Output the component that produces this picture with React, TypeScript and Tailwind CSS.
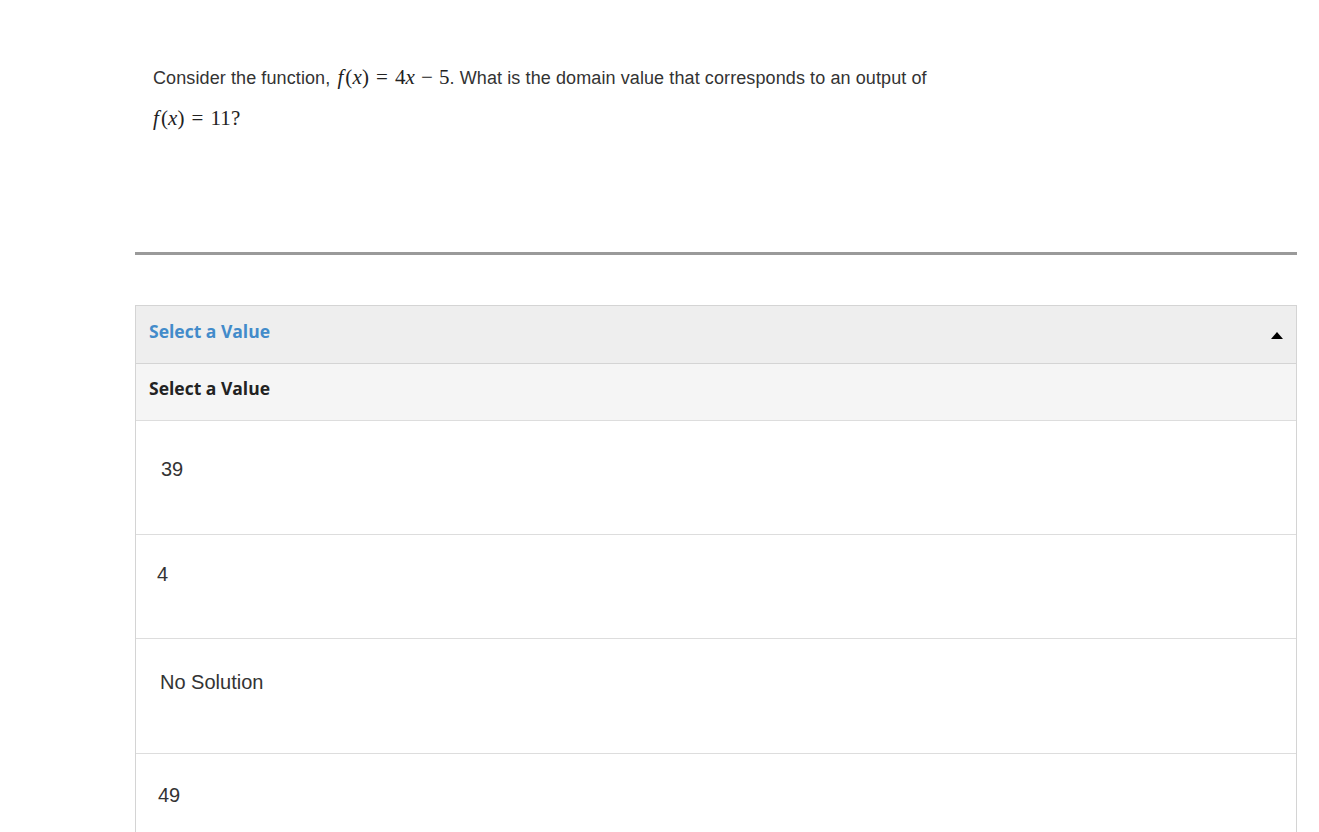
const options = [
  { label: "39", h: "h-[114px]", pl: "pl-[25px]", pt: "pt-[36px]" },
  { label: "4", h: "h-[104px]", pl: "pl-[21px]", pt: "pt-[27px]" },
  { label: "No Solution", h: "h-[115px]", pl: "pl-[24px]", pt: "pt-[31px]" },
  { label: "49", h: "h-[114px]", pl: "pl-[22px]", pt: "pt-[29px]" },
];

function M({ children }: { children: React.ReactNode }) {
  return <span className="font-['Liberation_Serif',serif] text-[21px] text-[#222]">{children}</span>;
}

function Op({ children }: { children: React.ReactNode }) {
  return <span className="mx-[7px]">{children}</span>;
}

export default function App() {
  return (
    <div className="min-h-screen bg-white">
      <div className="pl-[135px] pr-[22px] pt-[64px]">
        <div className="px-[18px] text-[18px] tracking-[0.1px] text-[#333] font-['Liberation_Sans',Arial,sans-serif]">
          <p className="leading-[26px]">
            Consider the function,{" "}
            <M>
              <i className="pl-[2px] pr-[2px]">f</i>(<i>x</i>)<Op>=</Op>4<i>x</i>
              <span className="mx-[6px]">−</span>5
            </M>
            . What is the domain value that corresponds to an output of
          </p>
          <p className="mt-[14px] leading-[26px]">
            <M>
              <i className="pr-[2px]">f</i>(<i>x</i>)<Op>=</Op>11?
            </M>
          </p>
        </div>

        <hr className="mt-[120px] border-0 h-[3px] bg-[#9a9a9a]" />

        <div className="mt-[50px] border border-[#d4d4d4] font-['Open_Sans',sans-serif]">
          <div className="flex h-[58px] items-center justify-between bg-[#eeeeee] pl-[13px] pr-[13px] pb-[6px] border-b border-[#d4d4d4]">
            <span className="text-[17.5px] font-bold text-[#428bca]">Select a Value</span>
            <svg width="12" height="7" viewBox="0 0 12 7" className="mt-[8px]">
              <path d="M6 0 L12 7 L0 7 Z" fill="#000" />
            </svg>
          </div>
          <div className="flex h-[57px] items-center bg-[#f5f5f5] pl-[13px] pb-[7px] border-b border-[#dddddd]">
            <span className="text-[17.5px] font-bold text-[#222]">Select a Value</span>
          </div>
          {options.map((o) => (
            <div key={o.label} className={`${o.h} ${o.pl} ${o.pt} border-b border-[#dddddd] bg-white`}>
              <span className="block leading-[24px] text-[20px] text-[#333] font-['Liberation_Sans',Arial,sans-serif]">
                {o.label}
              </span>
            </div>
          ))}
        </div>
      </div>
    </div>
  );
}
